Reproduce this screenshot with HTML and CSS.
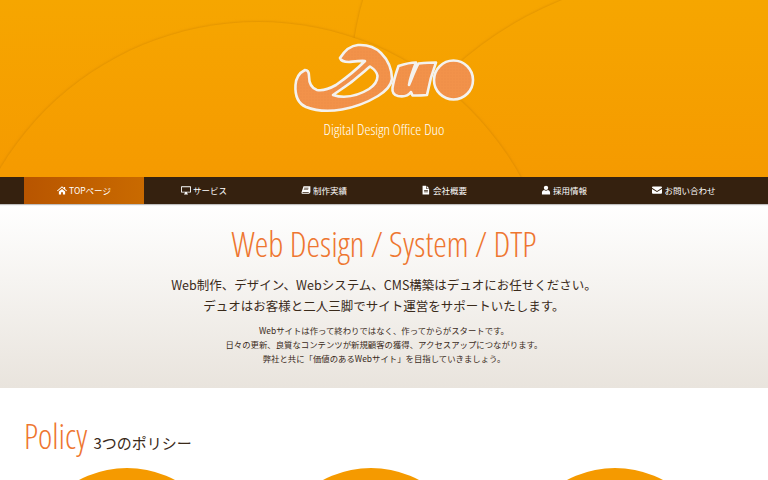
FILE: index.html
```html
<!DOCTYPE html>
<html lang="ja">
<head>
<meta charset="utf-8">
<title>Digital Design Office Duo</title>
<link rel="stylesheet" href="styles.css">
</head>
<body>

<header class="hero">
  <!-- overlapping discs behind the logo -->
  <svg class="hero-bg" width="768" height="177" viewBox="0 0 768 177">
    <defs>
      <linearGradient id="heroFill" gradientUnits="userSpaceOnUse" x1="0" y1="0" x2="0" y2="177">
        <stop offset="0" stop-color="#f6a600"/>
        <stop offset="1" stop-color="#f59a00"/>
      </linearGradient>
      <filter id="discShade" x="-10%" y="-10%" width="120%" height="120%">
        <feDropShadow dx="0" dy="0" stdDeviation="1.500" flood-color="#b87000" flood-opacity="0.6"/>
      </filter>
    </defs>
    <rect width="768" height="177" fill="url(#heroFill)"/>
    <circle cx="651" cy="84" r="300" fill="url(#heroFill)" filter="url(#discShade)"/>
    <circle cx="700" cy="340" r="367" fill="url(#heroFill)" filter="url(#discShade)"/>
    <circle cx="258" cy="322" r="300" fill="url(#heroFill)" filter="url(#discShade)"/>
  </svg>
  <svg class="logo" width="190" height="76" viewBox="289 40 190 76">
    <defs>
      <pattern id="logoDots" width="3" height="3" patternUnits="userSpaceOnUse">
        <rect width="3" height="3" fill="#f2924a"/>
        <circle cx="1" cy="1" r=".7" fill="#ee8c46"/>
      </pattern>
    </defs>
    <g fill="url(#logoDots)" stroke="#f4f2ee" stroke-width="2.6" stroke-linejoin="round">
      <path fill-rule="evenodd" d="M305 70C299 73 296 78 295.500 85C295 93 297 103 306 107C316 111 330 111.500 342 109.500C356 107 368 102 378 96C386 91 391 86 392 79C392 70 388 60 381 53C375 47 367 44.500 358 45C351 45.500 345 50 340 58C341 61 344 62 349 62C354 61.500 360 60.500 365 61C358 68 346 78 336 85C329 89 322 91 317 90C311 88 309 82 309 76C309 73 308 70 305 70ZM370 66.500C374 69 377 72 377.500 76C377.500 81 375 85 369 89C361 94 352 96.500 344 96.800C340 96.800 336 96 333 95C340 90 348 85 354 80C360 75 365 71 370 66.500Z"/>
      <path d="M398.500 66C403 64.500 410 62.500 416 62.500C413 70 410 78 409 85C412 78 415 70 418.500 63.500C424 63 430 62.500 436 62.500C432 73 429 84 427 95C422 95.500 417 95.500 412.500 95.500L411 92C408 96 403 97 398 96C394 95 392 92 392.500 88C393.500 81 396 73 398.500 66Z"/>
      <circle cx="453.500" cy="80" r="19.500"/>
    </g>
  </svg>
  <p class="tagline">Digital Design Office Duo</p>
</header>

<nav class="gnav">
  <a class="gnav-item is-current" href="#">
    <svg class="ico" viewBox="0 0 16 16"><path d="M8 2L0 9l1 1 7-6 7 6 1-1-3-2.600V3h-2v1.900zM3 10.500V15h3.500v-3.500h3V15H13v-4.500L8 6.200z"/></svg>TOPページ
  </a>
  <a class="gnav-item" href="#">
    <svg class="ico" viewBox="0 0 16 16"><path d="M1 2h14a1 1 0 0 1 1 1v8a1 1 0 0 1-1 1H9.500v1.500H11V15H5v-1.500h1.500V12H1a1 1 0 0 1-1-1V3a1 1 0 0 1 1-1zm.4 1.400v7.200h13.200V3.400z"/></svg>サービス
  </a>
  <a class="gnav-item" href="#">
    <svg class="ico" viewBox="0 0 16 16"><path d="M4 2h11v9.500L13 14H2.500C1 14 .500 12.500 1 11zm1 2.500v1h7v-1zm-.500 2.500v1h7V7zM3 11.500c-.800 0-.800 1.200 0 1.200h9l.800-1.200z"/></svg>制作実績
  </a>
  <a class="gnav-item" href="#">
    <svg class="ico" viewBox="0 0 16 16"><path d="M2.500 1H8v5h5v9H2.500zM9 1l4 4H9zM5 8v1h6V8zm0 2.500v1h6v-1z"/></svg>会社概要
  </a>
  <a class="gnav-item" href="#">
    <svg class="ico" viewBox="0 0 16 16"><circle cx="8" cy="4.500" r="3.500"/><path d="M1.500 15v-3c0-2.500 2-4 3.500-4 1 .800 2 1.200 3 1.200S10 8.800 11 8c1.500 0 3.500 1.500 3.500 4v3z"/></svg>採用情報
  </a>
  <a class="gnav-item" href="#">
    <svg class="ico" viewBox="0 0 16 16"><path d="M1.500 2.500h13A1.500 1.500 0 0 1 16 4v.500L8 9.500 0 4.500V4a1.500 1.500 0 0 1 1.500-1.500zM0 6.200V12.500A1.500 1.500 0 0 0 1.500 14h13a1.500 1.500 0 0 0 1.500-1.500V6.200L8 11.200z"/></svg>お問い合わせ
  </a>
</nav>

<section class="lead">
  <h1 class="lead-title"><span class="cond">Web Design / System / DTP</span></h1>
  <p class="lead-main">Web制作、デザイン、Webシステム、CMS構築はデュオにお任せください。<br>デュオはお客様と二人三脚でサイト運営をサポートいたします。</p>
  <p class="lead-sub">Webサイトは作って終わりではなく、作ってからがスタートです。<br>日々の更新、良質なコンテンツが新規顧客の獲得、アクセスアップにつながります。<br>弊社と共に「価値のあるWebサイト」を目指していきましょう。</p>
</section>

<section class="policy">
  <h2 class="policy-title"><span class="cond">Policy</span><small>3つのポリシー</small></h2>
  <div class="policy-row">
    <div class="disc"></div>
    <div class="disc"></div>
    <div class="disc"></div>
  </div>
</section>

</body>
</html>
```

FILE: styles.css
```css
html, body { margin: 0; padding: 0; height: 480px; overflow: hidden; }
body { background: #fff; color: #3a2a1a; font-family: "Noto Sans CJK JP", "Noto Sans", sans-serif; }
p, h1, h2 { margin: 0; font-weight: normal; }

.cond { display: inline-block; font-family: "Open Sans", sans-serif; font-weight: 300; font-stretch: condensed; }

/* header */
.hero { position: relative; height: 177px; display: flex; flex-direction: column; align-items: center; }
.hero-bg { position: absolute; left: 0; top: 0; }
.logo { position: relative; margin-top: 40px; }
.tagline { position: relative; margin-top: 1px; color: #fff; font: 300 15.200px/24px "Open Sans", sans-serif; font-stretch: condensed; }

/* nav */
.gnav { display: flex; height: 27px; padding: 0 24px; background: #35210f; box-shadow: 0 1px 1px rgba(0,0,0,.25); position: relative; }
.gnav-item { flex: 1; display: flex; align-items: center; justify-content: center; gap: 2px; padding-bottom: 1px; color: #fff; font-size: 8.500px; text-decoration: none; }
.gnav-item.is-current { background: linear-gradient(90deg, #b85500, #c96a00); }
.ico { width: 10px; height: 10px; fill: #fff; }

/* lead */
.lead { height: 184px; text-align: center; background: linear-gradient(#fff, #e9e4dd); overflow: hidden; }
.lead-title { margin-top: 15px; color: #ee7630; font-size: 34.400px; line-height: 46px; }
.lead-main { margin-top: 7px; font-size: 12.500px; line-height: 21px; }
.lead-sub { margin-top: 7px; font-size: 8.400px; line-height: 14px; }

/* policy */
.policy { padding: 26px 24px 0; }
.policy-title { display: flex; align-items: baseline; gap: 6px; color: #ee7630; font-size: 34px; line-height: 44px; }
.policy-title small { color: #3a2a1a; font: 15px "Noto Sans CJK JP", sans-serif; }
.policy-row { display: grid; grid-template-columns: repeat(3, 204px); gap: 40px; margin: 10px 0 0 1px; }
.disc { width: 204px; height: 204px; border-radius: 50%; background: #f59a00; }
```
